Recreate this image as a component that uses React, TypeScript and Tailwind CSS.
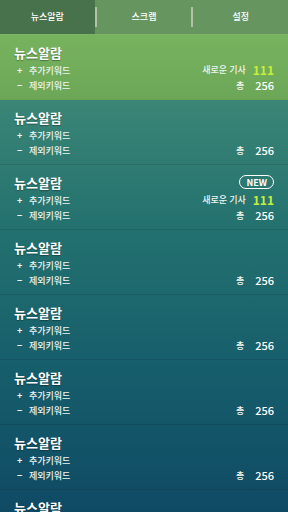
import React from 'react';

type Alarm = {
  title: string;
  newCount?: number;
  total: number;
  isNew?: boolean;
};

const alarms: Alarm[] = [
  { title: '뉴스알람', newCount: 111, total: 256 },
  { title: '뉴스알람', total: 256 },
  { title: '뉴스알람', newCount: 111, total: 256, isNew: true },
  { title: '뉴스알람', total: 256 },
  { title: '뉴스알람', total: 256 },
  { title: '뉴스알람', total: 256 },
  { title: '뉴스알람', total: 256 },
  { title: '뉴스알람', total: 256 },
];

const tabs = ['뉴스알람', '스크랩', '설정'];

const AlarmRow: React.FC<{ alarm: Alarm; active?: boolean }> = ({ alarm, active }) => (
  <div
    className={`h-[65px] shrink-0 flex justify-between pl-[14px] pr-[14px] border-b border-black/10 ${
      active ? 'bg-[linear-gradient(180deg,#77b35e,#6ca758)]' : ''
    }`}
  >
    <div className="flex flex-col pt-[8px]">
      <div className="h-[18px] flex items-center text-[13px] leading-none font-bold text-white [text-shadow:0_1px_1px_rgba(0,0,0,0.35)]">
        {alarm.title}
      </div>
      <div className="mt-[2px] h-[15px] flex items-center text-[9px] leading-none font-medium text-[#eef4f0]">
        <span className="w-[15px] pl-[3px] font-bold">+</span>
        <span>추가키워드</span>
      </div>
      <div className="h-[15px] flex items-center text-[9px] leading-none font-medium text-[#eef4f0]">
        <span className="w-[15px] pl-[3px] font-bold">−</span>
        <span>제외키워드</span>
      </div>
    </div>
    <div className="flex flex-col items-end pt-[8px]">
      <div className="h-[18px] flex items-center justify-end">
        {alarm.isNew && (
          <span className="h-[14px] px-[6px] flex items-center rounded-full border border-white text-[9px] leading-none font-bold text-white">
            NEW
          </span>
        )}
      </div>
      <div className="mt-[1px] h-[15px] flex items-center gap-[7px]">
        {alarm.newCount !== undefined && (
          <>
            <span className="text-[9px] leading-none font-medium text-[#eef4f0]">새로운 기사</span>
            <span className="text-[12px] leading-none font-bold text-[#c6ee3a]">{alarm.newCount}</span>
          </>
        )}
      </div>
      <div className="mt-[1px] h-[15px] flex items-center gap-[11px]">
        <span className="text-[9px] leading-none font-medium text-[#eef4f0]">총</span>
        <span className="text-[11px] leading-none font-medium text-white">{alarm.total}</span>
      </div>
    </div>
  </div>
);

const App: React.FC = () => {
  return (
    <div
      className="w-[288px] h-[512px] overflow-hidden flex flex-col bg-[linear-gradient(180deg,#4a8f74_0%,#3a8576_20%,#23716f_45%,#175f6c_70%,#0f4a64_100%)]"
      style={{ fontFamily: '"Noto Sans CJK KR", "Noto Sans", sans-serif' }}
    >
      <div className="h-[35px] shrink-0 flex bg-[#67955f] border-b border-[#7eb668]">
        {tabs.map((t, i) => (
          <React.Fragment key={t}>
            {i > 0 && <div className="w-[2px] h-[20px] self-center bg-[#aec3a8]" />}
            <div
              className={`flex-1 flex items-center justify-center text-[9px] font-medium text-white ${
                i === 0 ? 'bg-[#48724b]' : ''
              }`}
            >
              {t}
            </div>
          </React.Fragment>
        ))}
      </div>
      {alarms.map((a, i) => (
        <AlarmRow key={i} alarm={a} active={i === 0} />
      ))}
    </div>
  );
};

export default App;
